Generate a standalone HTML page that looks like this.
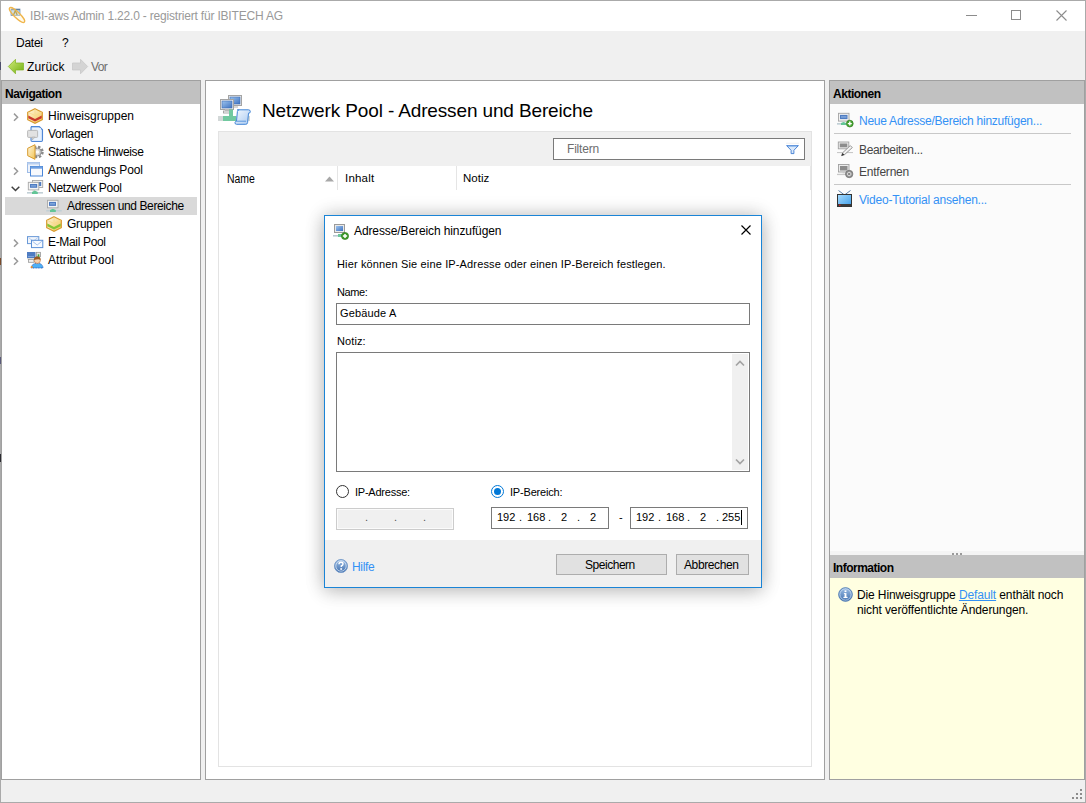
<!DOCTYPE html>
<html><head><meta charset="utf-8">
<style>
*{margin:0;padding:0;box-sizing:border-box}
html,body{width:1086px;height:803px;overflow:hidden}
body{position:relative;background:#f0f0f0;font-family:"Liberation Sans",sans-serif;font-size:12px;color:#000}
.a{position:absolute}
.t{position:absolute;white-space:nowrap;line-height:1}
svg{position:absolute;overflow:visible}
</style></head><body>

<svg width="0" height="0" style="position:absolute">
<defs>
<linearGradient id="gscr" x1="0" y1="0" x2="1" y2="1"><stop offset="0" stop-color="#9cc3ee"/><stop offset="1" stop-color="#3f73c0"/></linearGradient>
<linearGradient id="gcream" x1="0" y1="0" x2="1" y2="1"><stop offset="0" stop-color="#fff7e0"/><stop offset="1" stop-color="#f2c453"/></linearGradient>
<symbol id="mon" viewBox="0 0 16 16">
 <rect x="1.5" y="2.3" width="10.5" height="7.5" fill="#f4f4f4" stroke="#a8a8a8" stroke-width="0.9"/>
 <rect x="3" y="3.9" width="7" height="4" fill="#4f7cc2"/><rect x="4" y="5.2" width="5" height="1.3" fill="#8aaee0"/>
 <rect x="5.8" y="9.8" width="2" height="1.2" fill="#cfcfcf"/>
 <rect x="0.2" y="12" width="15.6" height="1.5" fill="#c2d0d6"/>
 <path d="M4 14 V12 L6.8 10.8 L9.8 12 V14 Z" fill="#63c596"/>
</symbol>

<linearGradient id="gblue" x1="0" y1="0" x2="0" y2="1"><stop offset="0" stop-color="#9fc0e6"/><stop offset="1" stop-color="#3f6fae"/></linearGradient>
<linearGradient id="ggreen" x1="0" y1="0" x2="1" y2="1"><stop offset="0" stop-color="#d3ec7c"/><stop offset="1" stop-color="#6fae10"/></linearGradient>
<linearGradient id="gtv" x1="0" y1="0" x2="1" y2="1"><stop offset="0" stop-color="#a8dcff"/><stop offset="1" stop-color="#3c9ce8"/></linearGradient>
<linearGradient id="gdoc" x1="0" y1="0" x2="1" y2="1"><stop offset="0" stop-color="#f4f9ff"/><stop offset="1" stop-color="#a9c9f0"/></linearGradient>
<symbol id="mong" viewBox="0 0 16 16">
 <rect x="3.5" y="1.5" width="10" height="8" fill="#e6e6e6" stroke="#9a9a9a"/>
 <rect x="5" y="3" width="7" height="5" fill="#8a8a8a"/>
 <rect x="7" y="10" width="3" height="1.5" fill="#bdbdbd"/>
 <rect x="0" y="12" width="16" height="1.2" fill="#c8c8c8"/>
</symbol>
<symbol id="hexr" viewBox="0 0 16 16">
 <polygon points="8,0.7 15.3,4.3 15.3,11.7 8,15.3 0.7,11.7 0.7,4.3" fill="url(#gcream)" stroke="#d79a2e" stroke-width="1.2"/>
 <polygon points="1.3,7.6 8,10.9 14.7,7.6 14.7,10.2 8,13.5 1.3,10.2" fill="#c9392b"/><path d="M8 1.5 V6.5 M1.5 4.5 L8 7.5 L14.5 4.5" fill="none" stroke="#f6d98a" stroke-width="0.8"/>
</symbol>
<symbol id="hexg" viewBox="0 0 16 16">
 <polygon points="8,0.7 15.3,4.3 15.3,11.7 8,15.3 0.7,11.7 0.7,4.3" fill="url(#gcream)" stroke="#d79a2e" stroke-width="1.2"/>
 <polygon points="1.3,7.6 8,10.9 14.7,7.6 14.7,10.2 8,13.5 1.3,10.2" fill="#86c534"/><path d="M8 1.5 V6.5 M1.5 4.5 L8 7.5 L14.5 4.5" fill="none" stroke="#f6d98a" stroke-width="0.8"/>
</symbol>
</defs></svg>
<!-- window frame -->
<div class="a" style="left:0;top:0;width:1086px;height:803px;border:1px solid #aaaaaa"></div>
<div class="a" style="left:0;top:62px;width:1px;height:8px;background:#4e4e6c"></div>
<div class="a" style="left:0;top:258px;width:1px;height:7px;background:#7a4a2a"></div>
<div class="a" style="left:0;top:357px;width:1px;height:7px;background:#5a5a7a"></div>
<div class="a" style="left:0;top:454px;width:1px;height:8px;background:#2a2a30"></div>
<!-- title bar -->
<div class="a" style="left:1px;top:1px;width:1084px;height:30px;background:#fff"></div>
<div class="t" style="left:30px;top:10px;color:#999;font-size:12px;letter-spacing:-0.188px">IBI-aws Admin 1.22.0 - registriert für IBITECH AG</div>


<!-- title icon & controls -->
<svg style="left:8px;top:6px" width="18" height="18" viewBox="0 0 18 18"><rect x="3" y="3" width="9" height="6.6" fill="#b6d6f4" stroke="#6f8fb0" stroke-width="0.7"/><rect x="3" y="3" width="9" height="1.2" fill="#5f7f9f"/><path d="M5.5 9 L7.3 4.6 L9.2 9" fill="none" stroke="#9a7a10" stroke-width="1.3"/><ellipse cx="9" cy="9" rx="10.3" ry="2.9" transform="rotate(44 9 9)" fill="rgba(255,240,200,0.35)" stroke="#f0b54a" stroke-width="1.3"/></svg>
<div class="a" style="left:966px;top:15px;width:11px;height:1px;background:#8c8c8c"></div>
<div class="a" style="left:1011px;top:10px;width:10px;height:10px;border:1px solid #8c8c8c"></div>
<svg style="left:1056px;top:10px" width="11" height="11"><path d="M0.5 0.5 L10.5 10.5 M10.5 0.5 L0.5 10.5" stroke="#8c8c8c" stroke-width="1.1"/></svg>
<!-- nav arrows -->
<svg style="left:8px;top:59px" width="16" height="16" viewBox="0 0 16 16"><path d="M0.3 7.5 L7.5 0.3 V4 H15.5 V11 H7.5 V14.8 Z" fill="url(#ggreen)" stroke="#7fb21e" stroke-width="0.7"/></svg>
<svg style="left:72px;top:59px" width="16" height="16" viewBox="0 0 16 16"><path d="M15.7 7.5 L8.5 0.3 V4 H0.5 V11 H8.5 V14.8 Z" fill="#d4d4d4" stroke="#c4c4c4" stroke-width="0.7"/></svg>
<!-- menu -->
<div class="t" style="left:16px;top:37px;font-size:12px;letter-spacing:-0.25px">Datei</div>
<div class="t" style="left:62px;top:37px;letter-spacing:-0.5px">?</div>
<div class="t" style="left:27px;top:61px;font-size:12px;letter-spacing:0.15px">Zurück</div>
<div class="t" style="left:91px;top:61px;color:#6d6d6d;font-size:12px;letter-spacing:-0.6px">Vor</div>

<!-- left panel -->
<div class="a" style="left:1px;top:80px;width:200px;height:700px;background:#fff;border:1px solid #a0a0a0;border-left-width:1px"></div>
<div class="a" style="left:2px;top:81px;width:198px;height:23px;background:#c1c1c1"></div>
<div class="t" style="left:5px;top:88px;font-weight:bold;font-size:12px;letter-spacing:-0.483px">Navigation</div>


<!-- tree -->
<svg style="left:13px;top:113px" width="6" height="9"><path d="M1 0.6 L4.6 4.2 L1 7.8" fill="none" stroke="#9a9a9a" stroke-width="1.5"/></svg>
<svg style="left:27px;top:108px" width="16" height="16"><use href="#hexr"/></svg>
<div class="t" style="left:48px;top:110px;font-size:12px;letter-spacing:-0.004px">Hinweisgruppen</div>
<svg style="left:27px;top:126px" width="16" height="16" viewBox="0 0 16 16"><path d="M4 0.6 H12.3 L15.5 3.8 V14.3 Q15.5 15.5 14.3 15.5 H5.2 Q4 15.5 4 14.3 V1.8 Q4 0.6 5.2 0.6 Z" fill="#d5e6fb" stroke="#4f87d6" stroke-width="1.1"/><rect x="5.3" y="2" width="8.5" height="12.2" fill="#e9f2fd"/><rect x="0.6" y="4.4" width="10" height="7" rx="0.8" fill="#e2e2e2" stroke="#b4b4b4" stroke-width="0.9"/><path d="M5.2 11.2 V14 L8 11.2 Z" fill="#e2e2e2" stroke="#b4b4b4" stroke-width="0.8"/></svg>
<div class="t" style="left:48px;top:128px;font-size:12px;letter-spacing:-0.271px">Vorlagen</div>
<svg style="left:27px;top:144px" width="16" height="16" viewBox="0 0 16 16"><circle cx="10.4" cy="8" r="5" fill="none" stroke="#8a8a8a" stroke-width="2.6" stroke-dasharray="2.3 1.63"/><circle cx="10.4" cy="8" r="3.9" fill="#d6d6d6" stroke="#8a8a8a" stroke-width="0.9"/><circle cx="10.4" cy="8" r="1.8" fill="#fafafa"/><path d="M8 0.7 L0.7 4.3 V11.7 L8 15.3 Z" fill="url(#gcream)" stroke="#d79a2e"/></svg>
<div class="t" style="left:48px;top:146px;font-size:12px;letter-spacing:-0.318px">Statische Hinweise</div>
<svg style="left:13px;top:167px" width="6" height="9"><path d="M1 0.6 L4.6 4.2 L1 7.8" fill="none" stroke="#9a9a9a" stroke-width="1.5"/></svg>
<svg style="left:27px;top:162px" width="16" height="16" viewBox="0 0 16 16"><rect x="0.5" y="0.5" width="12" height="10" fill="#eef3fb" stroke="#9dbbe6"/><rect x="0.5" y="0.5" width="12" height="2" fill="#b9d0f0"/><rect x="3.5" y="4.5" width="12" height="9.5" fill="#f7f9fd" stroke="#4a86d8"/><rect x="3.5" y="4.5" width="12" height="2.2" fill="#6e9fe0"/></svg>
<div class="t" style="left:48px;top:164px;font-size:12px;letter-spacing:-0.125px">Anwendungs Pool</div>
<svg style="left:11px;top:186px" width="9" height="6"><path d="M0.7 0.7 L4.5 4.5 L8.3 0.7" fill="none" stroke="#404040" stroke-width="1.5"/></svg>
<svg style="left:27px;top:180px" width="16" height="16" viewBox="0 0 16 16"><rect x="5.5" y="0.5" width="10.2" height="7" fill="#f4f4f4" stroke="#a8a8a8" stroke-width="0.9"/><rect x="7" y="2" width="7.2" height="4" fill="#4f7cc2"/><rect x="1.3" y="2.3" width="10.5" height="7.6" fill="#f4f4f4" stroke="#a8a8a8" stroke-width="0.9"/><rect x="3" y="4" width="7.2" height="3.8" fill="#4f7cc2"/><rect x="4" y="5.3" width="5" height="1.2" fill="#8aaee0"/><rect x="5.7" y="9.9" width="2" height="1" fill="#cfcfcf"/><rect x="0" y="12" width="16" height="1.6" fill="#c2d0d6"/><path d="M5 14 V12 L7.8 10.4 L10.8 12 V14 Z" fill="#63c596"/></svg>
<div class="t" style="left:48px;top:182px;font-size:12px;letter-spacing:-0.279px">Netzwerk Pool</div>
<div class="a" style="left:5px;top:197px;width:192px;height:18px;background:#d9d9d9"></div>
<svg style="left:46px;top:198px" width="16" height="16"><use href="#mon"/></svg>
<div class="t" style="left:67px;top:200px;font-size:12px;letter-spacing:-0.377px">Adressen und Bereiche</div>
<svg style="left:46px;top:216px" width="16" height="16"><use href="#hexg"/></svg>
<div class="t" style="left:67px;top:218px;font-size:12px;letter-spacing:-0.217px">Gruppen</div>
<svg style="left:13px;top:239px" width="6" height="9"><path d="M1 0.6 L4.6 4.2 L1 7.8" fill="none" stroke="#9a9a9a" stroke-width="1.5"/></svg>
<svg style="left:27px;top:234px" width="16" height="16" viewBox="0 0 16 16"><rect x="0.5" y="2.6" width="11.3" height="7" fill="#f2f6fc" stroke="#6a9ad8" stroke-width="1"/><path d="M1.5 3.6 L6.2 7.2 L10.8 3.6" fill="none" stroke="#a9c4ea" stroke-width="0.8"/><rect x="4.5" y="6.3" width="11.3" height="7.3" fill="#f7faff" stroke="#5b8fd6" stroke-width="1"/><path d="M5.5 7.3 L10.2 11 L14.8 7.3" fill="none" stroke="#8fb2e4" stroke-width="0.8"/></svg>
<div class="t" style="left:48px;top:236px;font-size:12px;letter-spacing:-0.335px">E-Mail Pool</div>
<svg style="left:13px;top:257px" width="6" height="9"><path d="M1 0.6 L4.6 4.2 L1 7.8" fill="none" stroke="#9a9a9a" stroke-width="1.5"/></svg>
<svg style="left:27px;top:252px" width="17" height="17" viewBox="0 0 17 17"><rect x="0" y="0" width="8.5" height="6" fill="#4f7cc2"/><rect x="1" y="4" width="6" height="0.8" fill="#8aaee0"/><rect x="0" y="6" width="8.5" height="1.3" fill="#d8d8d8"/><rect x="1.5" y="7.5" width="5.5" height="2.8" fill="#f0f0f0" stroke="#9a9a9a" stroke-width="0.8"/><rect x="9.3" y="0.3" width="4.3" height="4.5" fill="#e8e8e8" stroke="#8a8a8a" stroke-width="0.7"/><rect x="10.7" y="2.3" width="1.6" height="2.5" fill="#3aa63a"/><path d="M4.3 16 Q4.6 11.3 10.3 11.3 Q15.9 11.3 16 16 Z" fill="#4fb0f5" stroke="#1e4fb0" stroke-width="0.8" stroke-dasharray="1 0.6"/><circle cx="10.3" cy="8.3" r="3.1" fill="#f8d2b0" stroke="#b86a30" stroke-width="0.6"/><path d="M7 8 Q6.8 4.6 10.3 4.6 Q13.8 4.6 13.6 8 Q12 6.4 7 8 Z" fill="#9a5a24"/><rect x="3.8" y="14.2" width="1.8" height="1.8" fill="#f08a24"/></svg>
<div class="t" style="left:48px;top:254px;font-size:12px;letter-spacing:0.054px">Attribut Pool</div>

<!-- center panel -->
<div class="a" style="left:205px;top:80px;width:620px;height:700px;background:#fff;border:1px solid #a0a0a0"></div>
<div class="t" style="left:262px;top:101px;font-size:19px;letter-spacing:-0.135px">Netzwerk Pool - Adressen und Bereiche</div>
<div class="a" style="left:218px;top:131px;width:594px;height:636px;border:1px solid #e3e3e3"></div>
<div class="a" style="left:219px;top:132px;width:592px;height:34px;background:#f0f0f0"></div>
<div class="a" style="left:553px;top:138px;width:252px;height:22px;background:#fff;border:1px solid #7a7a7a"></div>
<div class="t" style="left:567px;top:143px;color:#6d6d6d;font-size:12px;letter-spacing:-0.192px">Filtern</div>
<div class="t" style="left:227px;top:173px;font-size:12px;transform:scaleX(0.87);transform-origin:0 0">Name</div>
<div class="t" style="left:345px;top:173px;font-size:11.5px;letter-spacing:0.19px">Inhalt</div>
<div class="t" style="left:463px;top:173px;font-size:11.5px;letter-spacing:-0.0px">Notiz</div>
<div class="a" style="left:337px;top:166px;width:1px;height:24px;background:#e5e5e5"></div>
<div class="a" style="left:456px;top:166px;width:1px;height:24px;background:#e5e5e5"></div>
<div class="a" style="left:810px;top:166px;width:1px;height:24px;background:#e8e8e8"></div>


<svg style="left:214px;top:90px" width="40" height="40" viewBox="0 0 40 40">
 <rect x="14.5" y="5.5" width="13" height="10" fill="#ececec" stroke="#a4a4a4"/><rect x="16" y="7" width="10" height="7" fill="url(#gscr)" stroke="#3d6db5" stroke-width="0.6"/>
 <rect x="19" y="16" width="5" height="2" fill="#d8d8d8"/>
 <rect x="6.5" y="9.5" width="13" height="10" fill="#ececec" stroke="#a4a4a4"/><rect x="8" y="11" width="10" height="7" fill="url(#gscr)" stroke="#3d6db5" stroke-width="0.6"/>
 <rect x="11" y="19.5" width="4" height="1.5" fill="#cfcfcf"/><rect x="9.5" y="21" width="7" height="2" fill="#fafafa" stroke="#9a9a9a" stroke-width="0.8"/>
 <rect x="4" y="26" width="32" height="5" fill="#d3d8d8"/>
 <rect x="9" y="26" width="13" height="5" fill="#72c9a0"/><rect x="15" y="19.5" width="4" height="7" fill="#72c9a0"/>
 <path d="M23 19.8 H34.5 Q36.3 19.8 36.3 21.6 Q36.3 23.4 34.5 23.2 L33.6 32.5 Q33.4 34.3 31.8 34.3 H22.6 Q20.8 34.3 21 32.6 Q21.2 31.2 22.5 31.2 L23.4 21.5 Q23.6 19.8 25.2 19.8" fill="url(#gdoc)" stroke="#4185d6" stroke-width="1"/>
 <path d="M22.5 31.2 H32" fill="none" stroke="#4185d6" stroke-width="0.8"/>
</svg>
<svg style="left:325px;top:176px" width="10" height="6"><path d="M0 5.5 L4.5 0.5 L9 5.5 Z" fill="#a8a8a8"/></svg>
<svg style="left:786px;top:142px" width="14" height="14" viewBox="0 0 14 14"><rect x="0" y="0.8" width="13" height="0.8" fill="#ececec"/><path d="M0.6 3.6 H12.4 L7.9 8.3 V11.6 H5.1 V8.3 Z" fill="#dbe9fa" stroke="#3c7bd3" stroke-width="0.9" stroke-linejoin="round"/><path d="M2 4.3 H11" stroke="#8db7ec" stroke-width="1"/></svg>
<!-- right panel -->
<div class="a" style="left:829px;top:80px;width:256px;height:700px;background:#fbfbfb;border:1px solid #a0a0a0"></div>
<div class="a" style="left:830px;top:81px;width:254px;height:23px;background:#c1c1c1"></div>
<div class="t" style="left:833px;top:88px;font-weight:bold;font-size:12px;letter-spacing:-0.479px">Aktionen</div>
<div class="t" style="left:859px;top:115px;color:#3391f5;font-size:12px;letter-spacing:-0.247px">Neue Adresse/Bereich hinzufügen...</div>
<div class="a" style="left:834px;top:133px;width:237px;height:1px;background:#c8c8c8"></div>
<div class="t" style="left:859px;top:144px;color:#454545;font-size:12px;letter-spacing:-0.337px">Bearbeiten...</div>
<div class="t" style="left:859px;top:166px;color:#454545;font-size:12px;letter-spacing:-0.231px">Entfernen</div>
<div class="a" style="left:834px;top:184px;width:237px;height:1px;background:#c8c8c8"></div>
<div class="t" style="left:859px;top:194px;color:#3391f5;font-size:12px;letter-spacing:-0.219px">Video-Tutorial ansehen...</div>
<div class="a" style="left:830px;top:555px;width:254px;height:23px;background:#c1c1c1"></div>
<div class="t" style="left:833px;top:562px;font-weight:bold;font-size:12px;letter-spacing:-0.5px">Information</div>
<div class="a" style="left:830px;top:578px;width:254px;height:201px;background:#ffffe1"></div>
<div class="t" style="left:857px;top:588px;line-height:15px;letter-spacing:-0.12px">Die Hinweisgruppe <span style="color:#3391f5;text-decoration:underline">Default</span> enthält noch<br>nicht veröffentlichte Änderungen.</div>


<svg style="left:836px;top:112px" width="18" height="18" viewBox="0 0 18 18"><rect x="2.5" y="1.3" width="10.5" height="7.8" fill="#f2f2f2" stroke="#a4a4a4" stroke-width="0.9"/><rect x="4" y="2.9" width="7.5" height="4.2" fill="#4f7cc2"/><rect x="5" y="4.3" width="5.5" height="1.3" fill="#8aaee0"/><rect x="6.7" y="9.2" width="2" height="1.3" fill="#cfcfcf"/><rect x="1" y="11" width="10" height="1.7" fill="#c2d0d6"/><path d="M5 13 V11 L7.5 10 L10 11 V13 Z" fill="#63c596"/><circle cx="13.8" cy="11.6" r="3.4" fill="#47a531" stroke="#2f7d1e" stroke-width="0.7"/><path d="M13.8 9.6 V13.6 M11.8 11.6 H15.8" stroke="#fff" stroke-width="1.4"/></svg>
<svg style="left:836px;top:141px" width="18" height="18" viewBox="0 0 18 18"><rect x="2.3" y="1" width="10.5" height="6.8" fill="#ececec" stroke="#a0a0a0" stroke-width="0.9"/><rect x="3.8" y="2.5" width="7.5" height="3.8" fill="#8c8c8c"/><rect x="1" y="11" width="16" height="1.1" fill="#c8c8c8"/><path d="M5.6 14.6 L6.6 11.8 L14.3 4.6 L16.3 6.6 L8.6 13.6 Z" fill="#f2f2f2" stroke="#8a8a8a" stroke-width="0.9"/><path d="M5.4 14.9 L6.5 11.9 L8.5 13.7 Z" fill="#333"/></svg>
<svg style="left:837px;top:163px" width="18" height="18" viewBox="0 0 18 18"><rect x="1.5" y="1.5" width="10.5" height="7.5" fill="#ececec" stroke="#a0a0a0" stroke-width="0.9"/><rect x="3" y="3" width="7.5" height="4.5" fill="#8c8c8c"/><rect x="5.7" y="9" width="2" height="1.3" fill="#c8c8c8"/><rect x="0" y="10.8" width="9" height="1.3" fill="#c8c8c8"/><circle cx="12.2" cy="11" r="3.7" fill="#8e8e8e" stroke="#6e6e6e" stroke-width="0.7"/><circle cx="12.2" cy="11" r="2.3" fill="#d8d8d8"/><path d="M10.9 9.7 L13.5 12.3 M13.5 9.7 L10.9 12.3" stroke="#707070" stroke-width="0.9"/></svg>
<svg style="left:837px;top:190px" width="16" height="18" viewBox="0 0 16 18"><path d="M1.5 0.5 L7.5 5 L13.5 0.5" fill="none" stroke="#5a7fa8" stroke-width="1"/><rect x="0.5" y="4.5" width="14" height="12" fill="url(#gtv)" stroke="#333" stroke-width="1"/><rect x="0.5" y="14" width="14" height="2.5" fill="#3a3a3a"/><rect x="2" y="14.6" width="1.5" height="1.2" fill="#e02020"/></svg>
<div class="a" style="left:830px;top:551px;width:254px;height:4px;background:#f4f4f4"></div>
<svg style="left:950px;top:552px" width="14" height="4"><rect x="2" y="1" width="2" height="2" fill="#9a9a9a"/><rect x="6" y="1" width="2" height="2" fill="#9a9a9a"/><rect x="10" y="1" width="2" height="2" fill="#9a9a9a"/></svg>
<svg style="left:838px;top:587px" width="15" height="15" viewBox="0 0 16 16"><circle cx="8" cy="8" r="7.3" fill="url(#gblue)" stroke="#3f6fae" stroke-width="0.9"/><circle cx="8" cy="8" r="6" fill="none" stroke="#dbe8f7" stroke-width="0.7"/><rect x="7" y="6.5" width="2" height="4.5" fill="#fff"/><rect x="5.8" y="10.5" width="4.4" height="1.3" fill="#fff"/><rect x="6.3" y="6.5" width="1.5" height="1" fill="#fff"/><rect x="7" y="3.6" width="2" height="1.8" fill="#fff"/></svg>
<svg style="left:1070px;top:788px" width="14" height="14"><g fill="#8c8c8c"><rect x="10" y="1" width="2" height="2"/><rect x="6" y="5" width="2" height="2"/><rect x="10" y="5" width="2" height="2"/><rect x="2" y="9" width="2" height="2"/><rect x="6" y="9" width="2" height="2"/><rect x="10" y="9" width="2" height="2"/></g></svg>
<!-- dialog -->
<div class="a" style="left:324px;top:215px;width:438px;height:373px;background:#fff;border:1px solid #1a84d6;box-shadow:0 0 18px rgba(0,0,0,.2),0 4px 18px rgba(0,0,0,.15)"></div>
<div class="a" style="left:325px;top:540px;width:436px;height:47px;background:#f0f0f0"></div>
<div class="t" style="left:354px;top:225px;font-size:12px;letter-spacing:-0.104px">Adresse/Bereich hinzufügen</div>
<div class="t" style="left:337px;top:259px;font-size:11px;letter-spacing:0.141px">Hier können Sie eine IP-Adresse oder einen IP-Bereich festlegen.</div>
<div class="t" style="left:337px;top:287px;font-size:11px;letter-spacing:-0.425px">Name:</div>
<div class="a" style="left:336px;top:303px;width:414px;height:22px;border:1px solid #7a7a7a;background:#fff"></div>
<div class="t" style="left:340px;top:308px;font-size:11px;letter-spacing:0.156px">Gebäude A</div>
<div class="t" style="left:337px;top:336px;font-size:11px;letter-spacing:0.1px">Notiz:</div>
<div class="a" style="left:336px;top:352px;width:414px;height:120px;border:1px solid #7a7a7a;background:#fff"></div>
<div class="a" style="left:732px;top:354px;width:16px;height:116px;background:#f0f0f0"></div>
<div class="t" style="left:355px;top:487px;font-size:11px;letter-spacing:-0.235px">IP-Adresse:</div>
<div class="t" style="left:510px;top:487px;font-size:11px;letter-spacing:-0.19px">IP-Bereich:</div>
<div class="a" style="left:336px;top:508px;width:118px;height:22px;border:1px solid #cccccc;background:#f0f0f0;box-shadow:inset 0 0 0 1px #fbfbfb"></div>
<div class="a" style="left:491px;top:507px;width:118px;height:22px;border:1px solid #7a7a7a;background:#fff"></div>
<div class="a" style="left:630px;top:507px;width:118px;height:22px;border:1px solid #7a7a7a;background:#fff"></div>
<div class="a" style="left:556px;top:554px;width:111px;height:21px;border:1px solid #adadad;background:#e1e1e1"></div>
<div class="t" style="left:585px;top:559px;font-size:12px;letter-spacing:-0.469px">Speichern</div>
<div class="a" style="left:676px;top:554px;width:73px;height:21px;border:1px solid #adadad;background:#e1e1e1"></div>
<div class="t" style="left:684px;top:559px;font-size:12px;letter-spacing:-0.394px">Abbrechen</div>
<div class="t" style="left:352px;top:561px;color:#3391f5;font-size:12px;letter-spacing:-0.35px">Hilfe</div>

<svg style="left:333px;top:223px" width="18" height="18" viewBox="0 0 18 18"><rect x="1.5" y="1.5" width="10" height="8" fill="#e9e9e9" stroke="#9a9a9a"/><rect x="3" y="3" width="7" height="5" fill="url(#gscr)"/><rect x="0" y="12" width="10" height="1.6" fill="#b9c9d2"/><rect x="5" y="11" width="4" height="3" fill="#6ec99c"/><circle cx="12" cy="13" r="3.6" fill="#3f9a2a" stroke="#2b7a1a" stroke-width="0.6"/><path d="M12 10.9 V15.1 M9.9 13 H14.1" stroke="#fff" stroke-width="1.5"/></svg>
<svg style="left:741px;top:225px" width="11" height="11"><path d="M0.5 0.5 L9.5 9.5 M9.5 0.5 L0.5 9.5" stroke="#000" stroke-width="1.15"/></svg>
<svg style="left:735px;top:360px" width="10" height="7"><path d="M1 5.5 L5 1.5 L9 5.5" fill="none" stroke="#a3a3a3" stroke-width="1.7"/></svg>
<svg style="left:735px;top:458px" width="10" height="7"><path d="M1 1.5 L5 5.5 L9 1.5" fill="none" stroke="#a3a3a3" stroke-width="1.7"/></svg>
<svg style="left:336px;top:485px" width="14" height="14"><circle cx="6.5" cy="6.5" r="6" fill="#fff" stroke="#333" stroke-width="1"/></svg>
<svg style="left:491px;top:485px" width="14" height="14"><circle cx="6.5" cy="6.5" r="6" fill="#fff" stroke="#0078d7" stroke-width="1"/><circle cx="6.5" cy="6.5" r="3.5" fill="#0078d7"/></svg>
<div class="t" style="left:365px;top:512px;font-size:11px;color:#555">.</div>
<div class="t" style="left:394px;top:512px;font-size:11px;color:#555">.</div>
<div class="t" style="left:423px;top:512px;font-size:11px;color:#555">.</div>
<div class="t" style="left:497px;top:512px;font-size:11px">192</div>
<div class="t" style="left:519px;top:512px;font-size:11px">.</div>
<div class="t" style="left:527px;top:512px;font-size:11px">168</div>
<div class="t" style="left:548px;top:512px;font-size:11px">.</div>
<div class="t" style="left:561px;top:512px;font-size:11px">2</div>
<div class="t" style="left:577px;top:512px;font-size:11px">.</div>
<div class="t" style="left:590px;top:512px;font-size:11px">2</div>
<div class="t" style="left:619px;top:512px;font-size:11px">-</div>
<div class="t" style="left:636px;top:512px;font-size:11px">192</div>
<div class="t" style="left:658px;top:512px;font-size:11px">.</div>
<div class="t" style="left:666px;top:512px;font-size:11px">168</div>
<div class="t" style="left:687px;top:512px;font-size:11px">.</div>
<div class="t" style="left:700px;top:512px;font-size:11px">2</div>
<div class="t" style="left:716px;top:512px;font-size:11px">.</div>
<div class="t" style="left:722px;top:512px;font-size:11px">255</div>
<div class="a" style="left:741px;top:510px;width:1px;height:15px;background:#000"></div>
<svg style="left:334px;top:559px" width="15" height="15" viewBox="0 0 15 15"><circle cx="7" cy="7" r="6.6" fill="url(#gblue)" stroke="#6f96c6" stroke-width="0.8"/><circle cx="7" cy="7" r="5.2" fill="none" stroke="#e2ecf8" stroke-width="0.7"/><path d="M5 5.3 Q5 3.3 7 3.3 Q9 3.3 9 5 Q9 6.2 7.3 7 V8" fill="none" stroke="#fff" stroke-width="1.4"/><rect x="6.3" y="9.2" width="1.8" height="1.6" fill="#fff"/></svg>
</body></html>
